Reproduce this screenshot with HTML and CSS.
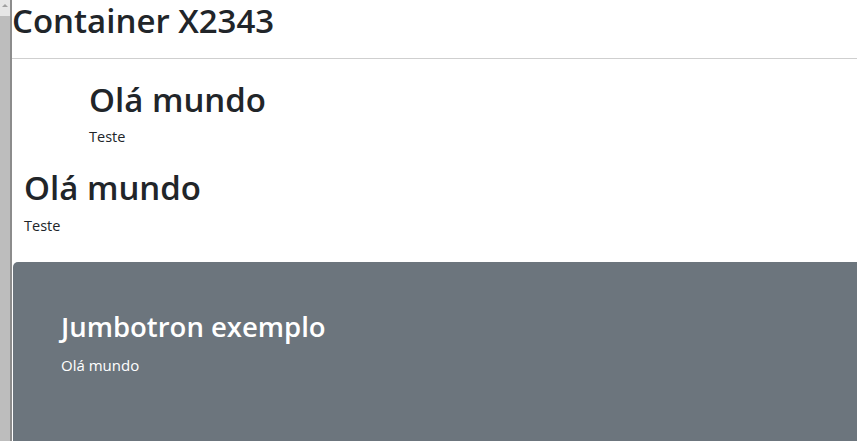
FILE: index.html
```html
<!DOCTYPE html>
<html lang="pt">
<head>
<meta charset="utf-8">
<title>Container X2343</title>
<link rel="stylesheet" href="styles.css">
</head>
<body>
<div class="frame">
  <div class="scrollbar">
    <div class="scroll-up"><span class="arrow"></span></div>
    <div class="thumb"></div>
  </div>
  <main class="page">
    <h2 class="title">Container X2343</h2>
    <hr class="divider">
    <section class="block block-indented">
      <h2 class="block-title">Olá mundo</h2>
      <p class="block-text">Teste</p>
    </section>
    <section class="block">
      <h2 class="block-title">Olá mundo</h2>
      <p class="block-text">Teste</p>
    </section>
    <div class="jumbotron">
      <h3 class="jumbo-title">Jumbotron exemplo</h3>
      <p class="jumbo-text">Olá mundo</p>
    </div>
  </main>
</div>
</body>
</html>
```

FILE: styles.css
```css
html, body {
  margin: 0;
  padding: 0;
  background: #ffffff;
}

body {
  font-family: "Open Sans", "Noto Sans", sans-serif;
  color: #212529;
}

.frame {
  display: flex;
  height: 441px;
  overflow: hidden;
}

.scrollbar {
  width: 10px;
  flex: 0 0 10px;
  border-right: 2px solid #8c8c8c;
  display: flex;
  flex-direction: column;
  background: #c1c1c1;
}

.scroll-up {
  height: 16px;
  background: #e6e6e6;
  display: flex;
  justify-content: center;
  padding-top: 4px;
  box-sizing: border-box;
}

.arrow {
  width: 0;
  height: 0;
  border-left: 3px solid transparent;
  border-right: 3px solid transparent;
  border-bottom: 3px solid #a0a0a0;
}

.thumb {
  flex: 1;
  background: #bdbdbd;
}

.page {
  flex: 1;
  min-width: 0;
  display: flex;
  flex-direction: column;
}

.title {
  margin: 1px 0 0;
  font-size: 33px;
  font-weight: 600;
  line-height: 39px;
}

.divider {
  margin: 18px 0 22px;
  border: 0;
  border-top: 1px solid #cfcfcf;
  height: 0;
}

.block {
  padding-left: 12px;
}

.block-indented {
  padding-left: 77px;
}

.block-title {
  margin: 0 0 7px;
  font-size: 33px;
  font-weight: 600;
  line-height: 38.4px;
}

.block-text {
  margin: 0 0 21px;
  font-size: 14.5px;
  line-height: 1.5;
}

.jumbotron {
  margin: 5px 0 0 1px;
  padding: 49px 48px 48px;
  flex: 1;
  background: #6c757d;
  color: #ffffff;
  border-radius: 5px 0 0 0;
}

.jumbo-title {
  margin: 0 0 10px;
  font-size: 27.5px;
  font-weight: 600;
  line-height: 32.4px;
}

.jumbo-text {
  margin: 0;
  font-size: 15px;
  line-height: 1.5;
}
```
